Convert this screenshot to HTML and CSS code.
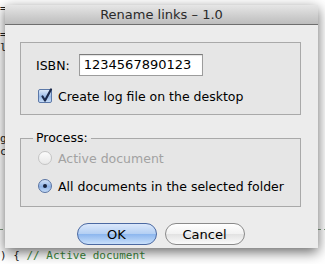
FILE: index.html
```html
<!DOCTYPE html>
<html lang="en">
<head>
    <meta charset="UTF-8">
    <title>Rename links - 1.0</title>
    <link rel="stylesheet" href="styles.css">
</head>
<body>
    <div class="editor">
        <div class="line">=</div>
        <div class="line"></div>
        <div class="line">=</div>
        <div class="line">lu</div>
        <div class="line"></div>
        <div class="line"></div>
        <div class="line"></div>
        <div class="line"></div>
        <div class="line"></div>
        <div class="line"></div>
        <div class="line">g</div>
        <div class="line">cl</div>
        <div class="line"></div>
        <div class="line"></div>
        <div class="line"></div>
        <div class="line"></div>
        <div class="line"></div>
        <div class="rule"></div>
        <div class="line"></div>
        <div class="line">) { <span class="comment">// Active document</span></div>
    </div>

    <div class="dialog">
        <div class="titlebar">Rename links &ndash; 1.0</div>
        <div class="dialog-body">
            <div class="group">
                <div class="field-row">
                    <label class="field-label">ISBN:</label>
                    <div class="text-input">1234567890123</div>
                </div>
                <div class="option-row">
                    <span class="checkbox checked">
                        <svg width="14" height="14" viewBox="0 0 14 14">
                            <path d="M3.5 6.5 L6 10.5 L12 -0.5" fill="none" stroke="#1c2a4c" stroke-width="2.2" stroke-linecap="round" stroke-linejoin="round"/>
                        </svg>
                    </span>
                    Create log file on the desktop
                </div>
            </div>

            <fieldset class="group process">
                <legend>Process:</legend>
                <div class="option-row disabled">
                    <span class="radio"></span>
                    Active document
                </div>
                <div class="option-row">
                    <span class="radio selected"></span>
                    All documents in the selected folder
                </div>
            </fieldset>

            <div class="buttons">
                <button class="btn btn-default">OK</button>
                <button class="btn">Cancel</button>
            </div>
        </div>
    </div>
</body>
</html>
```

FILE: styles.css
```css
body {
    margin: 0;
    width: 325px;
    height: 264px;
    overflow: hidden;
    position: relative;
    background-color: white;
    font-family: 'DejaVu Sans', 'Liberation Sans', sans-serif;
    font-size: 13px;
    color: black;
}

/* editor text behind the dialog */
.editor {
    padding-top: 2px;
    font-family: 'DejaVu Sans Mono', monospace;
    font-size: 11px;
    color: #222;
}
.line {
    height: 13px;
    line-height: 13px;
    white-space: pre;
}
.comment {
    color: #3b8a3b;
}
.rule {
    height: 13px;
    background: repeating-linear-gradient(90deg, #7c9a7c 0 3px, transparent 3px 6px) center / 100% 1px no-repeat;
}

/* dialog window */
.dialog {
    position: absolute;
    left: 5px;
    top: 5px;
    width: 313px;
    height: 243px;
    background-color: #ececec;
    box-shadow: 0 4px 12px rgba(0, 0, 0, 0.6);
}
.titlebar {
    height: 19px;
    line-height: 19px;
    border-bottom: 1px solid #6e6e6e;
    background: linear-gradient(#e6e6e6, #bdbdbd);
    text-align: center;
    color: #2a2a2a;
}
.dialog-body {
    padding: 17px 17px 0 15px;
    font-size: 12.5px;
}

.group {
    margin: 0;
    padding: 11px 15px 9px;
    border: 1px solid #a9a9a9;
    background-color: #e6e6e6;
}

.field-row {
    display: flex;
    align-items: center;
    gap: 9px;
}
.text-input {
    width: 118px;
    height: 20px;
    line-height: 20px;
    padding-left: 4px;
    border: 1px solid #9c9c9c;
    border-top-color: #7a7a7a;
    background-color: white;
    box-shadow: inset 0 1px 1px rgba(0, 0, 0, 0.12);
    font-size: 13px;
}

.option-row {
    display: flex;
    align-items: center;
    gap: 6px;
    height: 18px;
    margin-top: 11px;
    padding-left: 2px;
    white-space: nowrap;
}
.option-row.disabled {
    color: #a2a2a2;
}

.checkbox {
    width: 14px;
    height: 14px;
    box-sizing: border-box;
    border: 1px solid #5b78a8;
    border-radius: 2px;
    background: linear-gradient(#dce8f8, #9dbde9 55%, #c5dbf6);
    display: flex;
}
.checkbox svg {
    overflow: visible;
}

.radio {
    width: 14px;
    height: 14px;
    box-sizing: border-box;
    border-radius: 50%;
    border: 1px solid #c4c4c4;
    background: linear-gradient(#fbfbfb, #e8e8e8);
    position: relative;
}
.radio.selected {
    border-color: #5873a3;
    background: linear-gradient(#d3e2f7, #8fb3e6 55%, #c3daf6);
}
.radio.selected::after {
    content: "";
    position: absolute;
    left: 4px;
    top: 4px;
    width: 4px;
    height: 4px;
    border-radius: 50%;
    background-color: #17223d;
}

.process {
    margin-top: 14px;
    padding: 0 0 10px 17px;
    min-width: 0;
}
.process legend {
    margin-left: -5px;
    padding: 0 3px;
    line-height: 18px;
    color: black;
}
.process .option-row {
    height: 20px;
    margin-top: 8px;
    padding-left: 0;
}
.process .option-row:first-of-type {
    margin-top: 1px;
}

.buttons {
    display: flex;
    justify-content: center;
    gap: 8px;
    margin-top: 16px;
}
.btn {
    width: 80px;
    height: 22px;
    padding: 0;
    border: 1px solid #8a8a8a;
    border-radius: 11px;
    background: linear-gradient(#ffffff, #f1f1f1 50%, #e2e2e2 51%, #fafafa);
    font-family: inherit;
    font-size: 13px;
    color: black;
}
.btn-default {
    border-color: #4b69a2;
    background: linear-gradient(#dbe8fb, #b3cff3 50%, #8cb6ee 51%, #c9e0fb);
}
```
